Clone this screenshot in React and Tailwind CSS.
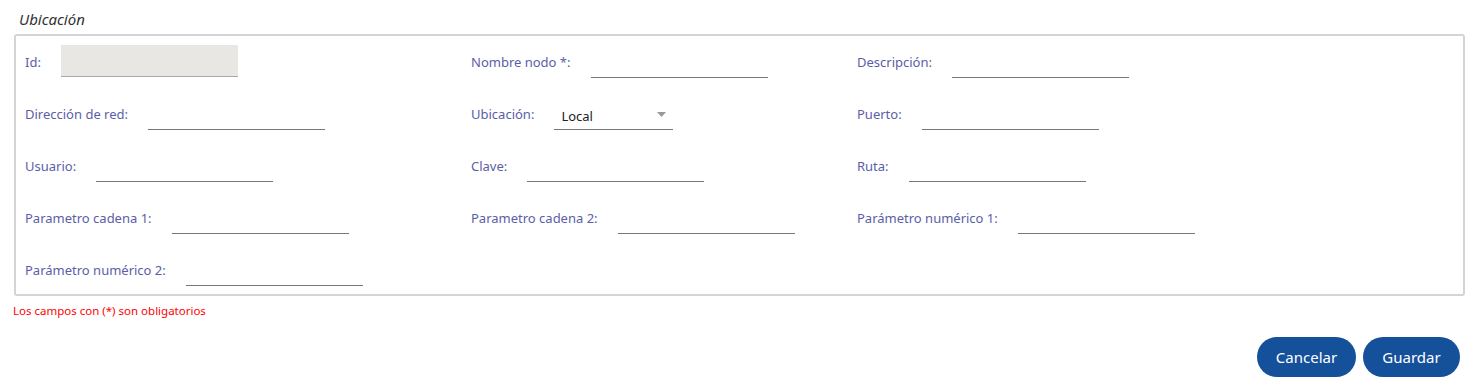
const font = { fontFamily: '"Noto Sans", "Open Sans", sans-serif' };

const rows = [
  [
    { label: "Id:", kind: "readonly" },
    { label: "Nombre nodo *:" },
    { label: "Descripción:" },
  ],
  [
    { label: "Dirección de red:" },
    { label: "Ubicación:", kind: "select", value: "Local" },
    { label: "Puerto:" },
  ],
  [{ label: "Usuario:" }, { label: "Clave:" }, { label: "Ruta:" }],
  [
    { label: "Parametro cadena 1:" },
    { label: "Parametro cadena 2:" },
    { label: "Parámetro numérico 1:" },
  ],
  [{ label: "Parámetro numérico 2:" }],
];

function Field({ field }) {
  if (field.kind === "readonly") {
    return (
      <div className="flex items-center h-[52px]">
        <span className="text-[13px] text-[#5a5ea8] mr-[20px]">{field.label}</span>
        <div className="w-[177px] h-[32px] -mt-[4px] bg-[#e8e7e4] border-b border-[#a8a8a8]" />
      </div>
    );
  }
  if (field.kind === "select") {
    return (
      <div className="flex items-center h-[52px]">
        <span className="text-[13px] text-[#5a5ea8] mr-[20px]">{field.label}</span>
        <div className="w-[119px] h-[26px] mt-[4px] border-b border-[#777] flex items-center justify-between pl-[7px] pr-[7px]">
          <span className="text-[13px] text-[#222]">{field.value}</span>
          <svg width="9" height="5" viewBox="0 0 9 5" className="mb-[4px]">
            <path d="M0 0 L9 0 L4.5 5 Z" fill="#999" />
          </svg>
        </div>
      </div>
    );
  }
  return (
    <div className="flex items-center h-[52px]">
      <span className="text-[13px] text-[#5a5ea8] mr-[20px]">{field.label}</span>
      <div className="w-[177px] h-[26px] mt-[4px] border-b border-[#777]" />
    </div>
  );
}

export default function App() {
  return (
    <div className="bg-white w-[1479px] h-[387px] relative" style={font}>
      <div className="pt-[9px] pl-[19px] text-[15px] italic text-[#333] leading-[20px]">Ubicación</div>
      <div className="mx-[14px] mt-[5px] h-[262px] border-2 border-[#d4d4d4] rounded-[3px] pl-[9px] pt-[1px]">
        {rows.map((row, i) => (
          <div key={i} className="grid grid-cols-[446px_386px_1fr]">
            {row.map((f, j) => (
              <Field key={j} field={f} />
            ))}
          </div>
        ))}
      </div>
      <div className="pl-[13px] pt-[7px] text-[11.5px] text-[#ff0000] leading-[16px]">
        Los campos con (*) son obligatorios
      </div>
      <div className="flex justify-end gap-[7px] pr-[19px] mt-[18px]">
        <button className="w-[99px] h-[40px] rounded-full bg-[#15509a] text-white text-[15px]">Cancelar</button>
        <button className="w-[97px] h-[40px] rounded-full bg-[#15509a] text-white text-[15px]">Guardar</button>
      </div>
    </div>
  );
}
